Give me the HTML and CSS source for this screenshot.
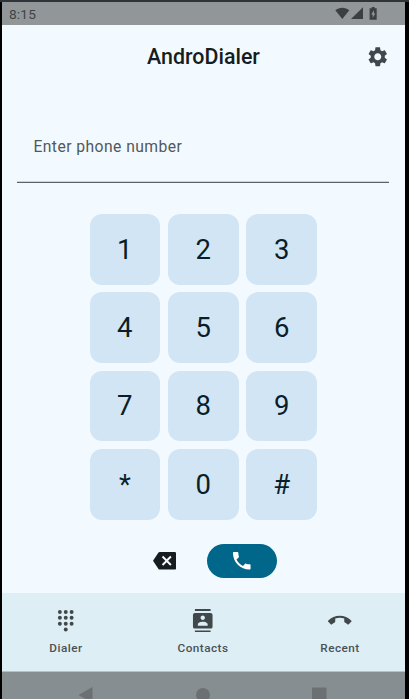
FILE: index.html
```html
<!DOCTYPE html>
<html lang="en">
<head>
<meta charset="utf-8">
<title>AndroDialer</title>
<link rel="stylesheet" href="styles.css">
</head>
<body>
<div class="phone">
  <div class="status">
    <span class="clock">8:15</span>
    <svg class="status-icons" viewBox="0 0 44 14">
      <path d="M0.300 3.200C4.300-.2 10.300-.2 14.300 3.200L7.300 12z"/>
      <path d="M28 .3V12H16z"/>
      <path fill-rule="evenodd" d="M36.800 0h2.800v1.200h2.100v11.500h-7.100V1.200h2.200zM39 3.300L36.200 7.500h1.500v3.300L40.400 6.500H39z"/>
    </svg>
  </div>
  <header class="appbar">
    <h1>AndroDialer</h1>
    <svg class="icon gear" viewBox="0 0 24 24"><path d="M19.140 12.940c.04-.3.06-.61.06-.94 0-.32-.02-.64-.07-.94l2.030-1.580c.18-.14.23-.41.12-.61l-1.920-3.320c-.12-.22-.37-.29-.59-.22l-2.390.96c-.5-.38-1.030-.7-1.620-.94l-.36-2.540c-.04-.24-.24-.41-.48-.41h-3.840c-.24 0-.43.17-.47.41l-.36 2.540c-.59.24-1.130.57-1.620.94l-2.390-.96c-.22-.08-.47 0-.59.22L2.740 8.870c-.12.21-.08.47.12.61l2.030 1.580c-.05.3-.09.63-.09.94s.02.64.07.94l-2.030 1.580c-.18.14-.23.41-.12.61l1.920 3.320c.12.22.37.29.59.22l2.390-.96c.5.38 1.030.7 1.620.94l.36 2.540c.05.24.24.41.48.41h3.840c.24 0 .44-.17.47-.41l.36-2.540c.59-.24 1.130-.56 1.620-.94l2.390.96c.22.08.47 0 .59-.22l1.920-3.320c.12-.22.07-.47-.12-.61l-2.010-1.580zM12 15.600c-1.980 0-3.600-1.620-3.600-3.600s1.620-3.600 3.600-3.600 3.600 1.620 3.600 3.600-1.620 3.600-3.600 3.600z"/></svg>
  </header>
  <div class="field">Enter phone number</div>
  <main class="keys">
    <div class="key">1</div><div class="key">2</div><div class="key">3</div>
    <div class="key">4</div><div class="key">5</div><div class="key">6</div>
    <div class="key">7</div><div class="key">8</div><div class="key">9</div>
    <div class="key">*</div><div class="key">0</div><div class="key">#</div>
  </main>
  <div class="actions">
    <svg class="icon erase" viewBox="0 0 24 24"><path d="M22 3H7c-.69 0-1.230.35-1.590.88L0 12l5.410 8.110c.36.53.9.89 1.590.89h15c1.100 0 2-.9 2-2V5c0-1.100-.9-2-2-2zm-3 12.590L17.590 17 14 13.410 10.410 17 9 15.590 12.590 12 9 8.410 10.410 7 14 10.590 17.590 7 19 8.410 15.410 12 19 15.590z"/></svg>
    <div class="call"><svg class="icon" viewBox="0 0 24 24"><path d="M6.620 10.790c1.440 2.830 3.760 5.140 6.590 6.590l2.200-2.200c.27-.27.67-.36 1.020-.24 1.120.37 2.330.57 3.570.57.55 0 1 .45 1 1V20c0 .55-.45 1-1 1-9.390 0-17-7.610-17-17 0-.55.45-1 1-1h3.500c.55 0 1 .45 1 1 0 1.250.2 2.450.57 3.570.11.35.03.74-.25 1.020l-2.200 2.200z"/></svg></div>
  </div>
  <nav class="tabs">
    <div class="tab">
      <svg class="icon" viewBox="0 0 24 24"><circle cx="6" cy="3" r="2"/><circle cx="12" cy="3" r="2"/><circle cx="18" cy="3" r="2"/><circle cx="6" cy="9" r="2"/><circle cx="12" cy="9" r="2"/><circle cx="18" cy="9" r="2"/><circle cx="6" cy="15" r="2"/><circle cx="12" cy="15" r="2"/><circle cx="18" cy="15" r="2"/><circle cx="12" cy="21" r="2"/></svg>
      <span>Dialer</span>
    </div>
    <div class="tab">
      <svg class="icon" viewBox="0 0 24 24"><path d="M20 0H4v2h16V0zM4 24h16v-2H4v2zM20 4H4c-1.100 0-2 .9-2 2v12c0 1.100.9 2 2 2h16c1.100 0 2-.9 2-2V6c0-1.100-.9-2-2-2zm-8 2.750c1.240 0 2.250 1.010 2.250 2.250s-1.010 2.250-2.250 2.250S9.750 10.240 9.750 9 10.760 6.750 12 6.750zM17 17H7v-1.500c0-1.670 3.330-2.500 5-2.500s5 .83 5 2.500V17z"/></svg>
      <span>Contacts</span>
    </div>
    <div class="tab">
      <svg class="icon" viewBox="0 0 24 24"><path d="M12 9c-1.600 0-3.150.25-4.600.72v3.100c0 .39-.23.74-.56.9-.98.49-1.870 1.120-2.660 1.850-.18.18-.43.28-.7.28-.28 0-.53-.11-.71-.29L.29 13.080c-.18-.17-.29-.42-.29-.7 0-.28.11-.53.29-.71C3.340 8.780 7.460 7 12 7s8.660 1.780 11.710 4.670c.18.18.29.43.29.71 0 .28-.11.53-.29.71l-2.480 2.480c-.18.18-.43.29-.71.29-.27 0-.52-.11-.7-.28-.79-.74-1.690-1.360-2.670-1.850-.33-.16-.56-.5-.56-.9v-3.100C15.150 9.250 13.600 9 12 9z"/></svg>
      <span>Recent</span>
    </div>
  </nav>
  <div class="sysbar">
    <svg viewBox="0 0 403 27"><path d="M90.500 15v16L76.500 23z"/><circle cx="201" cy="23" r="7"/><rect x="310" y="15.500" width="14.500" height="15" rx="1"/></svg>
  </div>
</div>
</body>
</html>
```
FILE: styles.css
```css
* { box-sizing: border-box; }
body {
  margin: 0;
  width: 409px;
  height: 699px;
  overflow: hidden;
  background: #000;
  border-top: 2px solid #303438;
  font-family: Roboto, "Liberation Sans", sans-serif;
}
svg { display: block; }
.phone {
  width: 403px;
  height: 697px;
  margin-left: 2px;
  background: #f3faff;
  display: flex;
  flex-direction: column;
}
.icon { width: 23.5px; height: 23.5px; fill: #40484c; }
.status {
  height: 23px;
  flex: none;
  background: #919698;
  display: flex;
  align-items: center;
  justify-content: space-between;
  padding: 0 27px 0 7px;
}
.clock { font-size: 13.7px; line-height: 23px; font-weight: 400; color: #3f4345; padding-top: 1px; letter-spacing: .15px; }
.status-icons { width: 44px; height: 14px; fill: #3b3f41; margin-right: -.5px; }
.appbar {
  height: 63px;
  flex: none;
  display: grid;
  grid-template-columns: 40px 1fr 40px;
  align-items: center;
}
.appbar h1 {
  grid-column: 2;
  margin: 0;
  text-align: center;
  font-size: 21.400px;
  line-height: 28px;
  font-weight: 500;
  color: #171c1f;
}
.gear { margin-left: .5px; }
.field {
  flex: none;
  height: 55px;
  margin: 40px 16px 0 15.400px;
  padding: 9px 16px 0;
  border-bottom: 1px solid #596468;
  box-shadow: inset 0 -1px 0 #c9d5d7;
  font-size: 15.700px;
  line-height: 20px;
  letter-spacing: .44px;
  color: #50585b;
}
.keys {
  flex: none;
  margin: 31px 0 0 87.600px;
  display: grid;
  grid-template-columns: repeat(3, 70.500px);
  grid-auto-rows: 70.500px;
  gap: 7.850px 7.950px;
}
.key {
  display: flex;
  align-items: center;
  justify-content: center;
  border-radius: 12px;
  background: #d2e5f4;
  color: #0a1e28;
  font-size: 27.500px;
  line-height: 32px;
  padding-top: .6px;
}
.actions {
  flex: none;
  height: 34px;
  margin: 24px 0 0 150.600px;
  display: flex;
  align-items: center;
  gap: 30.800px;
}
.erase { fill: #171c1f; }
.call {
  width: 70.500px;
  height: 34px;
  border-radius: 17px;
  background: #00668a;
  display: flex;
  align-items: center;
  justify-content: center;
}
.call .icon { fill: #fff; }
.tabs {
  height: 79px;
  margin-top: auto;
  flex: none;
  background: #deeef5;
  border-bottom: 1px solid #b5c1c7;
  display: grid;
  grid-template-columns: 128px 146px 128px;
  padding-top: 15.500px;
}
.tab {
  display: flex;
  flex-direction: column;
  align-items: center;
  gap: 7.500px;
  font-size: 11.750px;
  line-height: 16px;
  letter-spacing: .47px;
  font-weight: 500;
  color: #4a5256;
}
.sysbar { height: 27px; flex: none; background: #868e92; overflow: hidden; }
.sysbar svg { width: 403px; height: 27px; fill: #6d7072; }
```
